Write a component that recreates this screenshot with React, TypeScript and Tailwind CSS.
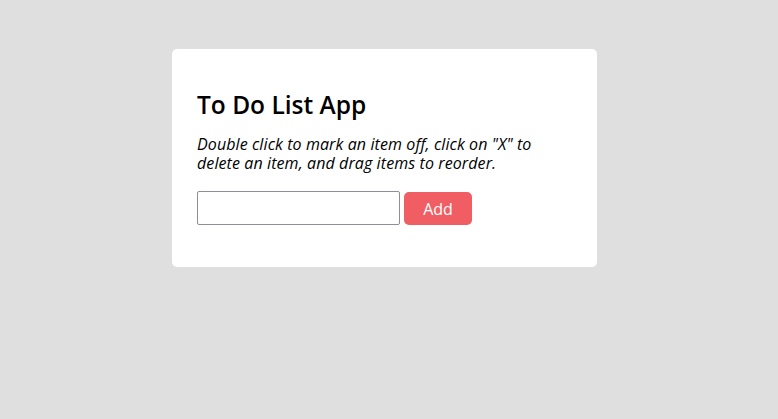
export default function App() {
  return (
    <div className="min-h-[419px] bg-[#dfdfdf] pl-[172px] pt-[49px] font-['Open_Sans',sans-serif] text-black">
      <div className="w-[425px] rounded-[5px] bg-white px-[25px] pt-[40px] pb-[42px]">
        <h1 className="text-[24.5px] leading-[32px] font-semibold">To Do List App</h1>
        <p className="mt-[14px] text-[16px] leading-[19px] italic tracking-[0.1px]">
          Double click to mark an item off, click on "X" to delete an item, and drag items to reorder.
        </p>
        <div className="mt-[17px] flex items-center gap-[4px]">
          <input
            type="text"
            className="h-[34px] w-[203px] rounded-[2px] border border-[#8f8d9a] px-2 text-[16px] outline-none"
          />
          <button className="mt-[2px] h-[33px] w-[68px] rounded-[5px] bg-[#f05e63] text-[16px] text-white">
            Add
          </button>
        </div>
      </div>
    </div>
  );
}
